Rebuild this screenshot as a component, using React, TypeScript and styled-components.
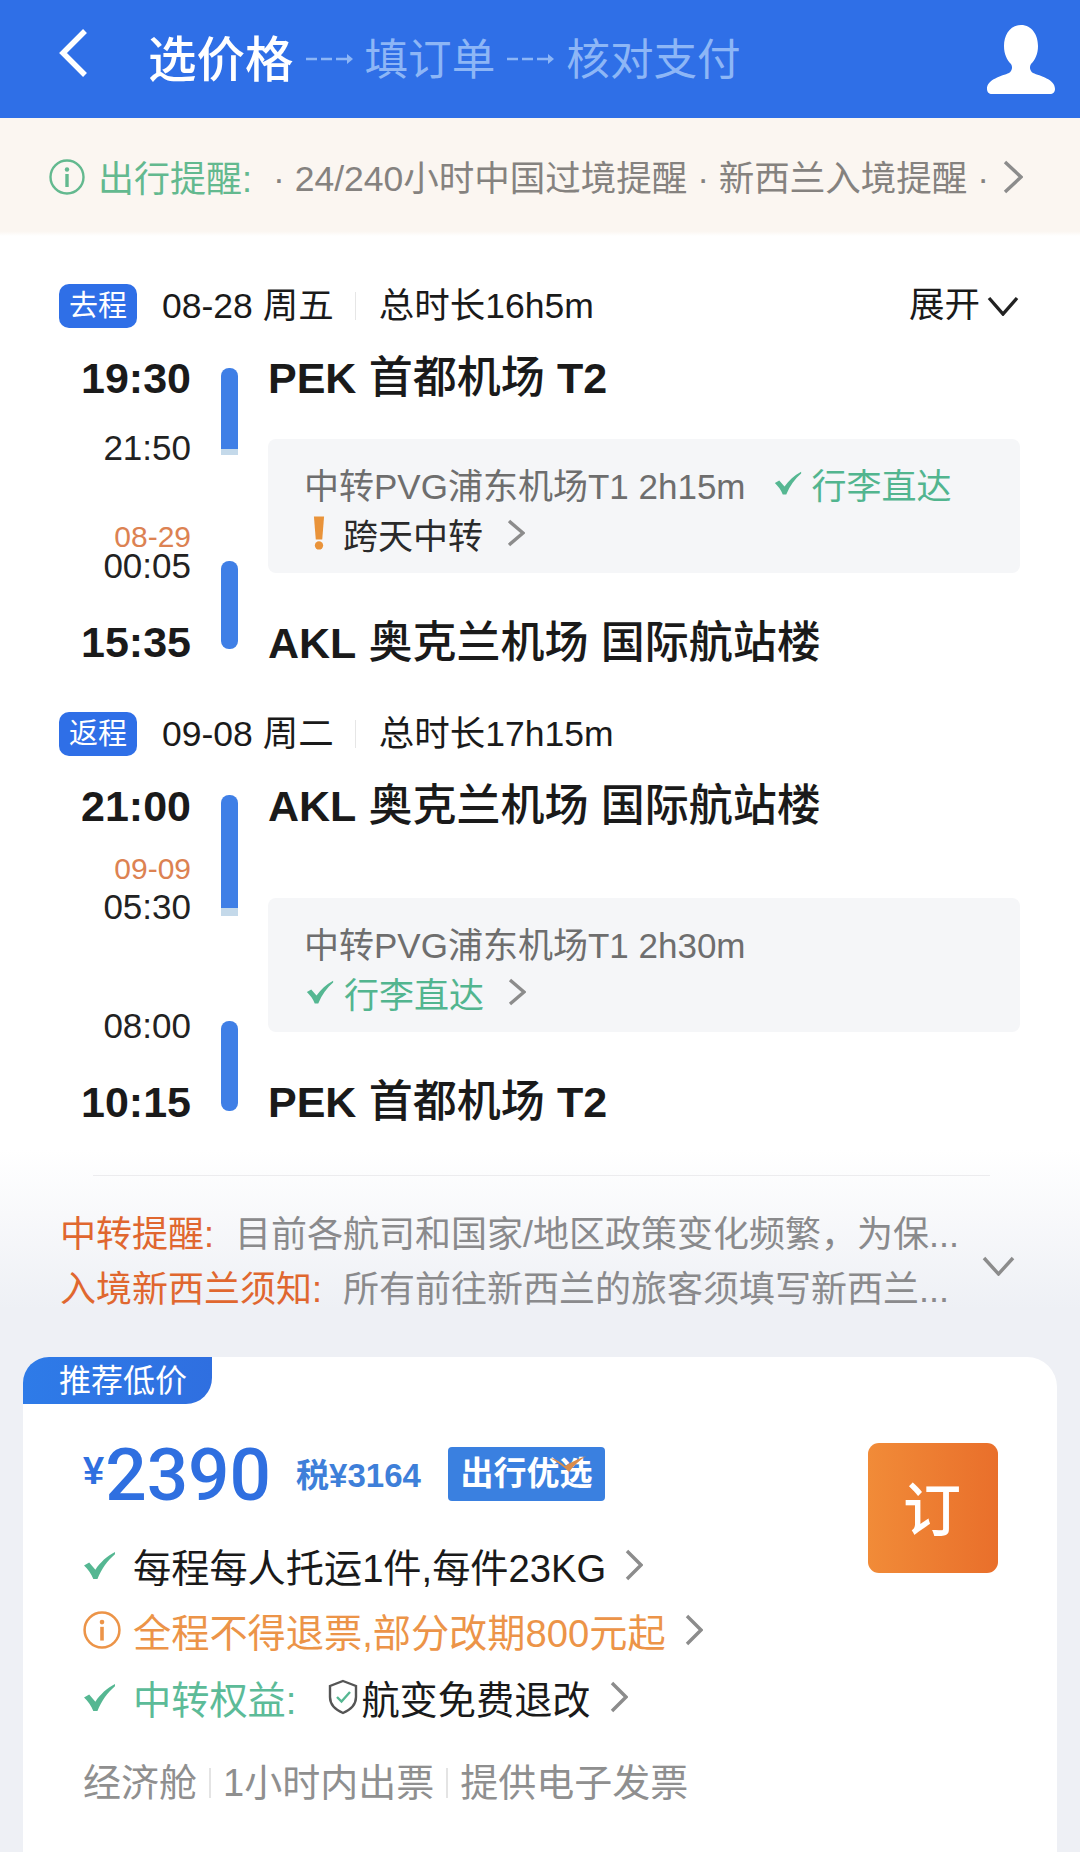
import React from "react";
import styled, { createGlobalStyle } from "styled-components";

const Global = createGlobalStyle`
  html, body { margin: 0; padding: 0; background: #eef0f5; }
  body { font-family: "Liberation Sans", "Noto Sans CJK SC", sans-serif; color: #1a1a1a; }
  * { box-sizing: border-box; }
`;

const Page = styled.div`
  width: 1080px;
  height: 1852px;
  overflow: hidden;
  display: flex;
  flex-direction: column;
  background: #eef0f5;
`;

const Header = styled.header`
  height: 118px;
  flex: none;
  background: #2f6fe7;
  display: flex;
  align-items: center;
  padding: 0 25px 0 58px;
`;
const BackIcon = styled.svg`
  width: 30px;
  height: 50px;
  margin-right: 60px;
  margin-top: -12px;
`;
const StepCurrent = styled.span`
  font-size: 48.5px;
  line-height: 60px;
  font-weight: 500;
  color: #fff;
  margin-top: 1px;
`;
const StepNext = styled.span`
  font-size: 43.6px;
  line-height: 60px;
  color: #8db6f6;
  margin-top: 1px;
`;
const StepArrow = styled.svg`
  width: 48px;
  height: 14px;
  margin: 0 11px 0 12px;
`;
const UserIcon = styled.svg`
  width: 68px;
  height: 69px;
  margin-left: auto;
`;

const NoticeBand = styled.div`
  height: 118px;
  flex: none;
  background: linear-gradient(#fbf6f1 0, #fbf6f1 96%, #ffffff 100%);
  display: flex;
  align-items: center;
  padding: 0 57px 0 49px;
  font-size: 36px;
`;
const InfoIcon = styled.svg<{ $size: number }>`
  width: ${(p) => p.$size}px;
  height: ${(p) => p.$size}px;
  flex: none;
`;
const BandLabel = styled.span`
  color: #63b98f;
  margin-left: 13px;
  margin-top: -3px;
  width: 175px;
  flex: none;
  white-space: nowrap;
`;
const BandText = styled.span`
  color: #85827f;
  white-space: nowrap;
  flex: 1;
  font-size: 35.5px;
  margin-top: -3px;
`;

const Main = styled.main`
  background: #fff;
  flex: none;
  padding: 48px 59px 0 59px;
`;
const SegmentHead = styled.div<{ $top?: number }>`
  display: flex;
  align-items: center;
  height: 44px;
  margin-top: ${(p) => p.$top ?? 0}px;
  font-size: 35.5px;
`;
const SegmentTag = styled.span`
  width: 78px;
  height: 44px;
  border-radius: 10px;
  background: #2f6fe7;
  color: #fff;
  font-size: 29px;
  line-height: 44px;
  text-align: center;
  margin-right: 25px;
`;
const HeadText = styled.span`
  line-height: 44px;
`;
const HeadDivider = styled.i`
  width: 1px;
  height: 28px;
  background: #e6e6e6;
  margin: 0 23px 0 21px;
`;
const Expand = styled.span`
  margin-left: auto;
  display: flex;
  align-items: center;
  gap: 7px;
  margin-right: 2px;
  line-height: 40px;
`;
const ExpandLabel = styled.span`
  margin-top: -3px;
`;

const Leg = styled.section`
  display: grid;
  grid-template-columns: 132px 17px 752px;
  column-gap: 30px;
  margin-top: 23px;
`;
const TimeColumn = styled.div`
  display: flex;
  flex-direction: column;
  align-items: flex-end;
`;
const MainTime = styled.div<{ $top?: number }>`
  font-size: 43px;
  line-height: 54px;
  font-weight: 700;
  margin-top: ${(p) => p.$top ?? 0}px;
`;
const StopTime = styled.div<{ $top?: number; $lh: number }>`
  font-size: 35px;
  line-height: ${(p) => p.$lh}px;
  color: #222;
  margin-top: ${(p) => p.$top ?? 0}px;
`;
const DayShift = styled.div<{ $top: number }>`
  font-size: 30px;
  line-height: 28px;
  color: #dc8252;
  margin-top: ${(p) => p.$top}px;
`;
const BarColumn = styled.div`
  display: flex;
  flex-direction: column;
`;
const BarLead = styled.div<{ $top: number; $h: number }>`
  width: 17px;
  height: ${(p) => p.$h}px;
  margin-top: ${(p) => p.$top}px;
  background: linear-gradient(#3f7fe6 0, #3f7fe6 93%, #c4d9ea 93%);
  border-radius: 8px 8px 0 0;
`;
const BarTail = styled.div<{ $top: number; $h: number }>`
  width: 17px;
  height: ${(p) => p.$h}px;
  margin-top: ${(p) => p.$top}px;
  background: #3f7fe6;
  border-radius: 8px;
`;
const RouteColumn = styled.div`
  display: flex;
  flex-direction: column;
`;
const Airport = styled.div<{ $top?: number }>`
  font-size: 44px;
  line-height: 54px;
  font-weight: 500;
  white-space: nowrap;
  margin-top: ${(p) => p.$top ?? 0}px;
`;
const AirportCode = styled.b`
  font-weight: 700;
  font-size: 43px;
`;
const TransferBox = styled.div<{ $top: number }>`
  height: 134px;
  margin-top: ${(p) => p.$top}px;
  background: #f5f6f8;
  border-radius: 8px;
  padding: 19px 0 0 36px;
`;
const TransferLine = styled.div`
  display: flex;
  align-items: center;
  height: 50px;
  font-size: 35px;
  color: #6e6e6e;
  white-space: nowrap;
`;
const GreenText = styled.span`
  font-size: 35px;
  color: #52b58f;
  margin-left: 10px;
`;
const DarkText = styled.span`
  font-size: 35px;
  color: #2a2a2a;
  margin-left: 18px;
`;
const CheckIcon = styled.svg<{ $w: number; $h: number; $left?: number }>`
  width: ${(p) => p.$w}px;
  height: ${(p) => p.$h}px;
  margin-left: ${(p) => p.$left ?? 0}px;
  flex: none;
`;
const WarnIcon = styled.svg`
  width: 12px;
  height: 36px;
  margin-left: 9px;
  flex: none;
`;
const ChevronSvg = styled.svg<{ $w: number; $h: number; $left?: number; $top?: number }>`
  width: ${(p) => p.$w}px;
  height: ${(p) => p.$h}px;
  margin-left: ${(p) => p.$left ?? 0}px;
  margin-top: ${(p) => p.$top ?? 0}px;
  flex: none;
`;

const LowerZone = styled.div`
  flex: 1;
  display: flex;
  flex-direction: column;
  background: linear-gradient(#ffffff 0, #ffffff 20px, #eef0f5 180px);
`;
const HairLine = styled.div`
  height: 1px;
  margin: 46px 90px 0 93px;
  background: #ececee;
`;
const TipsRow = styled.div`
  display: flex;
  align-items: center;
  padding: 31px 65px 0 60px;
`;
const TipsList = styled.div`
  flex: 1;
  font-size: 36px;
  line-height: 55px;
  white-space: nowrap;
`;
const TipLabel = styled.span`
  color: #e0672f;
  margin-right: 21px;
`;
const TipText = styled.span`
  color: #8a8a8c;
`;

const Card = styled.article`
  position: relative;
  flex: 1;
  margin: 40px 23px 0;
  background: #fff;
  border-radius: 30px 30px 0 0;
  padding: 82px 59px 0 60px;
`;
const CardTag = styled.div`
  position: absolute;
  left: 0;
  top: 0;
  width: 189px;
  height: 47px;
  border-radius: 26px 0 26px 0;
  background: linear-gradient(90deg, #2e7be8, #2f6fe0);
  color: #fff;
  font-size: 32px;
  line-height: 49px;
  padding-left: 36px;
`;
const Cta = styled.button`
  position: absolute;
  right: 59px;
  top: 86px;
  width: 130px;
  height: 130px;
  border: 0;
  border-radius: 11px;
  background: linear-gradient(90deg, #f18b38, #e96f2b);
  color: #fff;
  font-family: inherit;
  font-size: 58px;
  font-weight: 500;
  padding: 0 2px 4px 0;
`;
const PriceRow = styled.div`
  display: flex;
  align-items: center;
  height: 72px;
  color: #2f6fe0;
`;
const Yen = styled.span`
  font-size: 38px;
  font-weight: 700;
  margin-top: -8px;
`;
const Amount = styled.span`
  font-family: Roboto, "Liberation Sans", sans-serif;
  font-size: 73px;
  line-height: 72px;
  font-weight: 500;
  margin-left: 1px;
`;
const Tax = styled.span`
  font-size: 33px;
  font-weight: 700;
  color: #3e7fd9;
  margin-left: 25px;
  margin-top: -4px;
  white-space: nowrap;
`;
const Badge = styled.span`
  position: relative;
  width: 157px;
  height: 54px;
  margin-left: 27px;
  margin-top: -2px;
  border-radius: 4px;
  background: #3a80e0;
  color: #fff;
  font-size: 33px;
  font-weight: 700;
  line-height: 54px;
  text-align: center;
  white-space: nowrap;
`;
const BadgeMark = styled.svg`
  position: absolute;
  left: 102px;
  top: 9px;
  width: 36px;
  height: 16px;
`;
const PerkRow = styled.div<{ $top: number }>`
  display: flex;
  align-items: center;
  height: 56px;
  margin-top: ${(p) => p.$top}px;
  font-size: 38.2px;
  white-space: nowrap;
`;
const PerkIconSlot = styled.span`
  width: 50px;
  flex: none;
  display: flex;
  align-items: center;
`;
const PerkOrange = styled.span`
  color: #ec9448;
`;
const PerkGreen = styled.span`
  color: #5cbb98;
  margin-right: 32px;
`;
const ShieldIcon = styled.svg`
  width: 30px;
  height: 36px;
  margin-right: 3px;
  flex: none;
`;
const MetaRow = styled.div`
  display: flex;
  align-items: center;
  margin-top: 30px;
  font-size: 38px;
  line-height: 56px;
  color: #8f8f8f;
  white-space: nowrap;
`;
const MetaDivider = styled.i`
  width: 2px;
  height: 30px;
  background: #e4e4e4;
  margin: 0 12px;
`;

type ChevronProps = { w?: number; h?: number; dir?: "right" | "down"; color?: string; left?: number; top?: number; sw?: number };
const Chevron = ({ w = 18, h = 32, dir = "right", color = "#8c8c8c", left, top, sw = 3.4 }: ChevronProps) => (
  <ChevronSvg $w={w} $h={h} $left={left} $top={top} viewBox={`0 0 ${w} ${h}`} fill="none" stroke={color} strokeWidth={sw}>
    {dir === "right" ? (
      <polyline points={`2,2 ${w - 2},${h / 2} 2,${h - 2}`} />
    ) : (
      <polyline points={`2,2 ${w / 2},${h - 2} ${w - 2},2`} />
    )}
  </ChevronSvg>
);

const Check = ({ w = 33, h = 29, left }: { w?: number; h?: number; left?: number }) => (
  <CheckIcon $w={w} $h={h} $left={left} viewBox="0 0 32 28">
    <path d="M1 14l5-3 6 7C17 11 23 5 31 1v2C24 9 18 17 14 27h-4C8 22 5 18 1 14z" fill="#55b792" />
  </CheckIcon>
);

const Info = ({ size, color }: { size: number; color: string }) => (
  <InfoIcon $size={size} viewBox="0 0 36 36" fill="none">
    <circle cx="18" cy="18" r="16.5" stroke={color} strokeWidth="2.4" />
    <circle cx="18" cy="10.5" r="2.2" fill={color} />
    <rect x="16.3" y="15" width="3.4" height="13" fill={color} />
  </InfoIcon>
);

const StepDash = () => (
  <StepArrow viewBox="0 0 48 14" fill="none" stroke="#8db6f6" strokeWidth="2.4">
    <path d="M0 7h11M15 7h11M30 7h12" />
    <path d="M41 2l6 5-6 5z" fill="#8db6f6" stroke="none" />
  </StepArrow>
);

export default function App() {
  return (
    <Page>
      <Global />
      <Header>
        <BackIcon viewBox="0 0 30 50" fill="none" stroke="#fff" strokeWidth="5.5">
          <polyline points="27,3 5,25 27,47" />
        </BackIcon>
        <StepCurrent>选价格</StepCurrent>
        <StepDash />
        <StepNext>填订单</StepNext>
        <StepDash />
        <StepNext>核对支付</StepNext>
        <UserIcon viewBox="0 0 68 69">
          <path
            d="M34 0c-11 0-17 10-17 21 0 8 3 14 7 18 2 3 1 7-2 9-7 3-22 6-22 16 0 3 2 5 5 5h58c3 0 5-2 5-5 0-10-15-13-22-16-3-2-4-6-2-9 4-4 7-10 7-18C51 10 45 0 34 0z"
            fill="#fff"
          />
        </UserIcon>
      </Header>

      <NoticeBand>
        <Info size={36} color="#63b98f" />
        <BandLabel>出行提醒:</BandLabel>
        <BandText>· 24/240小时中国过境提醒 · 新西兰入境提醒 ·</BandText>
        <Chevron w={20} h={34} />
      </NoticeBand>

      <Main>
        <SegmentHead>
          <SegmentTag>去程</SegmentTag>
          <HeadText>08-28 周五</HeadText>
          <HeadDivider />
          <HeadText>总时长16h5m</HeadText>
          <Expand>
            <ExpandLabel>展开</ExpandLabel>
            <Chevron dir="down" w={32} h={20} color="#222" />
          </Expand>
        </SegmentHead>
        <Leg>
          <TimeColumn>
            <MainTime>19:30</MainTime>
            <StopTime $lh={40} $top={23}>21:50</StopTime>
            <DayShift $top={55}>08-29</DayShift>
            <StopTime $lh={30}>00:05</StopTime>
            <MainTime $top={34}>15:35</MainTime>
          </TimeColumn>
          <BarColumn>
            <BarLead $top={17} $h={87} />
            <BarTail $top={106} $h={88} />
          </BarColumn>
          <RouteColumn>
            <Airport><AirportCode>PEK</AirportCode> 首都机场 <AirportCode>T2</AirportCode></Airport>
            <TransferBox $top={34}>
              <TransferLine>
                中转PVG浦东机场T1 2h15m
                <Check w={28} h={26} left={28} />
                <GreenText>行李直达</GreenText>
              </TransferLine>
              <TransferLine>
                <WarnIcon viewBox="0 0 13 36">
                  <path d="M1 0h11l-2 25H3z" fill="#e9933a" />
                  <circle cx="6.5" cy="31.5" r="4.5" fill="#e9933a" />
                </WarnIcon>
                <DarkText>跨天中转</DarkText>
                <Chevron w={18} h={28} left={24} />
              </TransferLine>
            </TransferBox>
            <Airport $top={43}><AirportCode>AKL</AirportCode> 奥克兰机场 国际航站楼</Airport>
          </RouteColumn>
        </Leg>

        <SegmentHead $top={42}>
          <SegmentTag>返程</SegmentTag>
          <HeadText>09-08 周二</HeadText>
          <HeadDivider />
          <HeadText>总时长17h15m</HeadText>
        </SegmentHead>
        <Leg>
          <TimeColumn>
            <MainTime>21:00</MainTime>
            <DayShift $top={22}>09-09</DayShift>
            <StopTime $lh={40} $top={4}>05:30</StopTime>
            <StopTime $lh={30} $top={84}>08:00</StopTime>
            <MainTime $top={34}>10:15</MainTime>
          </TimeColumn>
          <BarColumn>
            <BarLead $top={16} $h={121} />
            <BarTail $top={105} $h={90} />
          </BarColumn>
          <RouteColumn>
            <Airport><AirportCode>AKL</AirportCode> 奥克兰机场 国际航站楼</Airport>
            <TransferBox $top={65}>
              <TransferLine>中转PVG浦东机场T1 2h30m</TransferLine>
              <TransferLine>
                <Check w={28} h={26} left={2} />
                <GreenText>行李直达</GreenText>
                <Chevron w={18} h={28} left={24} />
              </TransferLine>
            </TransferBox>
            <Airport $top={43}><AirportCode>PEK</AirportCode> 首都机场 <AirportCode>T2</AirportCode></Airport>
          </RouteColumn>
        </Leg>
      </Main>

      <LowerZone>
        <HairLine />
        <TipsRow>
          <TipsList>
            <div>
              <TipLabel>中转提醒:</TipLabel>
              <TipText>目前各航司和国家/地区政策变化频繁{"\uFF0C"}为保...</TipText>
            </div>
            <div>
              <TipLabel>入境新西兰须知:</TipLabel>
              <TipText>所有前往新西兰的旅客须填写新西兰...</TipText>
            </div>
          </TipsList>
          <Chevron dir="down" w={33} h={20} top={8} />
        </TipsRow>
        <Card>
          <CardTag>推荐低价</CardTag>
          <Cta>订</Cta>
          <PriceRow>
            <Yen>¥</Yen>
            <Amount>2390</Amount>
            <Tax>税¥3164</Tax>
            <Badge>
              出行优选
              <BadgeMark viewBox="0 0 36 16">
                <path d="M0 2c6 1 11 4 15 8C21 6 28 3 36 0c-6 4-12 9-17 16C13 10 7 6 0 2z" fill="#d98d4c" />
              </BadgeMark>
            </Badge>
          </PriceRow>
          <PerkRow $top={26}>
            <PerkIconSlot><Check /></PerkIconSlot>
            每程每人托运1件,每件23KG
            <Chevron left={19} />
          </PerkRow>
          <PerkRow $top={9}>
            <PerkIconSlot><Info size={38} color="#ec9448" /></PerkIconSlot>
            <PerkOrange>全程不得退票,部分改期800元起</PerkOrange>
            <Chevron left={19} />
          </PerkRow>
          <PerkRow $top={11}>
            <PerkIconSlot><Check /></PerkIconSlot>
            <PerkGreen>中转权益:</PerkGreen>
            <ShieldIcon viewBox="0 0 30 36" fill="none">
              <path d="M15 2l13 5v11c0 8-6 13-13 16C8 31 2 26 2 18V7z" stroke="#555" strokeWidth="2.4" />
              <path d="M9 18l4.5 4.5L22 13" stroke="#55b792" strokeWidth="2.4" />
            </ShieldIcon>
            航变免费退改
            <Chevron left={19} />
          </PerkRow>
          <MetaRow>
            经济舱
            <MetaDivider />
            1小时内出票
            <MetaDivider />
            提供电子发票
          </MetaRow>
        </Card>
      </LowerZone>
    </Page>
  );
}
